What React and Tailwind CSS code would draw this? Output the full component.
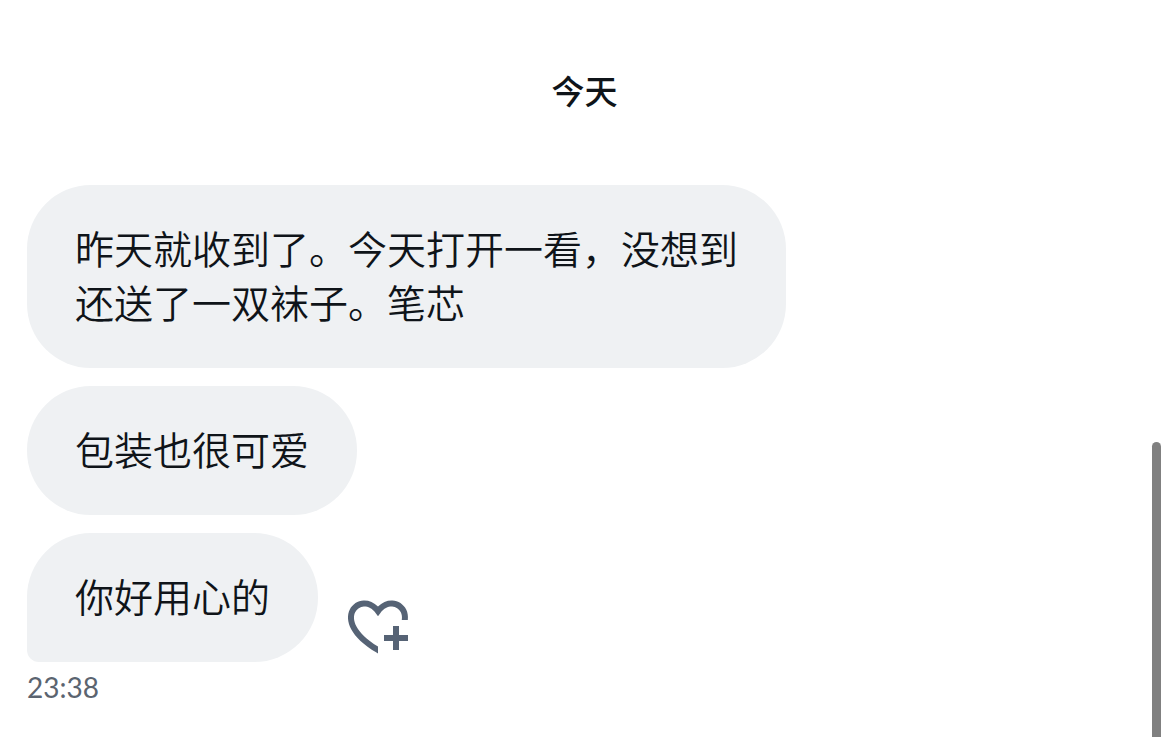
import clsx from "clsx";

const messages = [
  { id: 1, text: "昨天就收到了。今天打开一看，没想到还送了一双袜子。笔芯" },
  { id: 2, text: "包装也很可爱" },
  { id: 3, text: "你好用心的" },
];

function HeartPlusIcon() {
  return (
    <svg viewBox="0 0 24 24" className="size-18 fill-current" aria-hidden="true">
      <path d="M17 12v3h-2.998v2h3v3h2v-3h3v-2h-3.001v-3H17zm-5 6.839c-3.871-2.34-6.053-4.639-7.127-6.609-1.112-2.04-1.031-3.7-.479-4.82.561-1.13 1.667-1.84 2.91-1.91 1.222-.06 2.68.51 3.892 2.16l.806 1.09.805-1.09c1.211-1.65 2.668-2.22 3.89-2.16 1.242.07 2.347.78 2.908 1.91.334.677.49 1.554.321 2.59h2.011c.153-1.283-.039-2.469-.539-3.48-.887-1.79-2.647-2.91-4.601-3.01-1.65-.09-3.367.56-4.796 2.01-1.43-1.45-3.147-2.1-4.798-2.01-1.954.1-3.714 1.22-4.601 3.01-.896 1.81-.846 4.17.514 6.67 1.353 2.48 4.003 5.12 8.382 7.67l.502.299v-2.32z" />
    </svg>
  );
}

function Message({ text, isLast }) {
  return (
    <li className="flex items-end gap-6">
      <p
        className={clsx(
          "max-w-[759px] rounded-[64px] bg-[#eff1f3] px-12 pt-[35px] pb-10 text-[39px] leading-[54px] font-[350]",
          isLast && "rounded-bl-xl"
        )}
      >
        {text}
      </p>
      {isLast && (
        <button type="button" aria-label="添加回应" className="shrink-0 text-[#566375]">
          <HeartPlusIcon />
        </button>
      )}
    </li>
  );
}

export default function App() {
  return (
    <main
      lang="zh-CN"
      className="relative min-h-screen overflow-hidden bg-white px-[27px] pt-[63px] pb-8 font-['Noto_Sans_CJK_SC',sans-serif] text-[#0f1419]"
    >
      <h2 className="text-center text-[33px] leading-[54px] font-medium">今天</h2>

      <ul className="mt-17 flex flex-col gap-[18px]">
        {messages.map((m, i) => (
          <Message key={m.id} text={m.text} isLast={i === messages.length - 1} />
        ))}
      </ul>
      <time dateTime="23:38" className="mt-[7px] block font-[Lato,sans-serif] text-[28px] leading-9 text-[#5b6470]">
        23:38
      </time>

      {/* Scroll thumb */}
      <div className="absolute right-2 bottom-0 h-2/5 w-[9px] rounded-t-full bg-[#808080]" />
    </main>
  );
}
